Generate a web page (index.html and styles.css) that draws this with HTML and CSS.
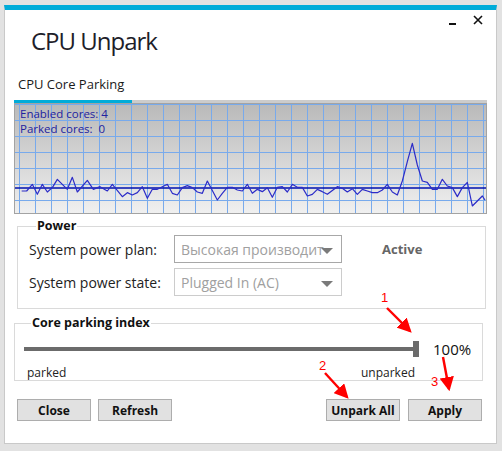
FILE: index.html
```html
<!DOCTYPE html>
<html>
<head>
<meta charset="utf-8">
<link rel="stylesheet" href="styles.css">
</head>
<body>
<div class="window">
  <div class="titlebar">
    <h1 class="title">CPU Unpark</h1>
    <div class="controls">
      <span class="ctl-min"></span>
      <svg class="ctl-close" width="10" height="10" viewBox="0 0 10 10"><path d="M1 1L9 9M9 1L1 9" stroke="#111" stroke-width="1.6"/></svg>
    </div>
  </div>
  <div class="tabs">
    <div class="tab">CPU Core Parking</div>
  </div>
  <div class="tabline"><div class="tabline-active"></div></div>
  <div class="chart">
    <svg class="chart-svg" width="471" height="109" viewBox="0 0 471 109">
      <defs>
        <linearGradient id="bg" x1="0" y1="0" x2="0" y2="1">
          <stop offset="0" stop-color="#b9b9b9"/>
          <stop offset="1" stop-color="#f0f0f0"/>
        </linearGradient>
        <pattern id="grid" x="4" y="0" width="16" height="16" patternUnits="userSpaceOnUse">
          <rect x="0" y="0" width="1" height="16" fill="#78aaec"/>
          <rect x="0" y="0" width="16" height="1" fill="#78aaec"/>
        </pattern>
      </defs>
      <rect width="471" height="109" fill="url(#bg)"/>
      <rect width="471" height="109" fill="url(#grid)"/>
      <line x1="0" y1="84" x2="471" y2="84" stroke="#0010b0" stroke-width="1.4"/>
      <g transform="translate(-15,-4) scale(0.33333)">
        <polyline fill="none" stroke="#2c2cc8" stroke-width="1.2" vector-effect="non-scaling-stroke" stroke-linejoin="round"
          points="65,273 80,273 97,253 112,283 127,253 142,276 157,263 172,238 202,268 217,232 232,276 262,241 280,268 300,260 322,273 337,253 367,290 382,278 397,285 412,278 427,260 442,295 457,268 472,268 502,253 517,280 532,285 547,263 562,257 577,263 592,276 607,280 622,243 652,300 667,280 682,262 697,262 712,270 727,273 742,253 757,280 772,268 787,275 802,263 817,292 832,262 847,260 862,276 877,253 892,262 907,262 922,288 937,283 952,268 967,275 982,283 1012,260 1027,265 1042,276 1057,266 1072,283 1087,268 1102,273 1117,278 1132,278 1147,270 1162,253 1177,276 1192,285 1207,243 1222,185 1237,130 1252,195 1267,243 1282,247 1297,268 1312,268 1327,238 1342,258 1357,263 1372,290 1387,263 1402,247 1417,318 1447,288 1455,300"/>
      </g>
    </svg>
    <div class="chart-info">
      <div>Enabled cores: 4</div>
      <div>Parked cores:&nbsp;&nbsp;0</div>
    </div>
  </div>

  <fieldset class="group power">
    <legend>Power</legend>
    <div class="power-grid">
      <div class="label">System power plan:</div>
      <div class="combo combo-focus"><span class="combo-text clip">Высокая производительность</span><span class="combo-arrow"></span></div>
      <div class="status">Active</div>
      <div class="label">System power state:</div>
      <div class="combo"><span class="combo-text">Plugged In (AC)</span><span class="combo-arrow"></span></div>
      <div></div>
    </div>
  </fieldset>

  <fieldset class="group parking">
    <legend>Core parking index</legend>
    <div class="slider-row">
      <div class="slider">
        <div class="track"></div>
        <div class="thumb"></div>
      </div>
      <div class="percent">100%</div>
    </div>
    <div class="slider-labels">
      <span>parked</span>
      <span>unparked</span>
    </div>
  </fieldset>

  <div class="buttons">
    <div class="btn-group">
      <button class="btn">Close</button>
      <button class="btn">Refresh</button>
    </div>
    <div class="btn-group right">
      <button class="btn">Unpark All</button>
      <button class="btn">Apply</button>
    </div>
  </div>

  <svg class="annotations" width="502" height="451" viewBox="0 0 502 451">
    <defs>
      <marker id="ah" markerWidth="6" markerHeight="6" refX="5" refY="3" orient="auto" markerUnits="strokeWidth">
        <path d="M0 0L6 3L0 6Z" fill="#ff0000"/>
      </marker>
    </defs>
    <g stroke="#ff0000" stroke-width="2.4" fill="none">
      <line x1="387" y1="308" x2="410" y2="331" marker-end="url(#ah)"/>
      <line x1="325" y1="373" x2="347" y2="397" marker-end="url(#ah)"/>
      <line x1="443" y1="357" x2="449" y2="389" marker-end="url(#ah)"/>
    </g>
    <g fill="#ff0000" font-family="Liberation Sans, sans-serif" font-size="13">
      <text x="381" y="302">1</text>
      <text x="319" y="370">2</text>
      <text x="431" y="386">3</text>
    </g>
  </svg>
</div>
</body>
</html>
```
FILE: styles.css
```css
* { box-sizing: border-box; }
html, body { margin: 0; padding: 0; }
body {
  background: #e2e2e2;
  font-family: "Open Sans", "Noto Sans", sans-serif;
  color: #1a1a1a;
  width: 502px;
  height: 451px;
  overflow: hidden;
}
.window {
  position: relative;
  margin: 5px 0 0 4px;
  width: 493px;
  height: 439px;
  background: #fff;
  border: 1px solid #c9c9c9;
  border-top: 5px solid #00acd9;
  padding: 0 9px 0 9px;
}
.titlebar {
  display: flex;
  justify-content: space-between;
  align-items: flex-start;
  height: 56px;
}
.title {
  margin: 14px 0 0 17px;
  font-family: "Open Sans", sans-serif;
  font-weight: 400;
  font-size: 24px;
  letter-spacing: -1px;
  line-height: 34px;
  color: #1e1e2a;
}
.controls {
  display: flex;
  align-items: flex-start;
  gap: 17px;
  margin: 5px 4px 0 0;
}
.ctl-min {
  display: block;
  width: 7px;
  height: 2px;
  background: #111;
  margin-top: 8px;
}
.ctl-close { display: block; }
.tabs { display: flex; height: 34px; }
.tab {
  margin: 8px 0 0 4px;
  font-size: 13px;
  line-height: 20px;
  color: #1a1a1a;
}
.tabline {
  height: 3px;
  background: #cccccc;
}
.tabline-active {
  width: 118px;
  height: 3px;
  background: #00acd9;
}
.chart {
  position: relative;
  height: 111px;
  border: 1px solid #a3a3a3;
  display: flex;
}
.chart-svg { display: block; }
.chart-info {
  position: absolute;
  left: 5px;
  top: 2px;
  font-size: 11.5px;
  line-height: 15px;
  color: #2222a0;
}
.group {
  border: 1px solid #dadada;
  margin: 0;
  padding: 0;
  min-width: 0;
}
.group legend {
  font-weight: 700;
  font-size: 12.5px;
  line-height: 14px;
  padding: 0 1px;
  color: #111;
}
.power {
  margin: 5px 1px 0 3px;
  height: 90px;
  padding: 2px 0 0 11px;
}
.power legend { margin-left: 7px; }
.power-grid {
  display: grid;
  grid-template-columns: 145px 168px auto;
  grid-template-rows: 28px 28px;
  row-gap: 5px;
  align-items: center;
}
.label {
  font-size: 14px;
  color: #222;
}
.combo {
  position: relative;
  height: 28px;
  border: 1px solid #cccccc;
  overflow: hidden;
  display: flex;
  align-items: center;
  padding-left: 6px;
}
.combo-focus { border-color: #a8a8a8; }
.combo-text {
  font-size: 14px;
  color: #a0a0a0;
  white-space: nowrap;
}
.combo-text.clip {
  display: block;
  max-width: 143px;
  overflow: hidden;
}
.combo-arrow {
  position: absolute;
  right: 8px;
  top: 12px;
  width: 0;
  height: 0;
  border-left: 6px solid transparent;
  border-right: 6px solid transparent;
  border-top: 6px solid #7a7a7a;
}
.status {
  margin-left: 40px;
  font-weight: 700;
  font-size: 13px;
  color: #666;
}
.parking {
  margin: 7px 4px 0 0;
  height: 65px;
  padding: 0 0 0 9px;
}
.parking legend { margin-left: 7px; }
.slider-row {
  display: flex;
  align-items: center;
  height: 22px;
  margin-top: 8px;
}
.slider {
  position: relative;
  width: 395px;
  height: 16px;
  display: flex;
  align-items: center;
}
.track {
  width: 393px;
  height: 4px;
  background: #6b6b6b;
}
.thumb {
  position: absolute;
  left: 389px;
  top: 0;
  width: 6px;
  height: 16px;
  background: #6b6b6b;
}
.percent {
  margin-left: 14px;
  font-size: 15px;
  color: #111;
}
.slider-labels {
  display: flex;
  justify-content: space-between;
  width: 388px;
  margin: 4px 0 0 3px;
  font-size: 12px;
  line-height: 17px;
  color: #222;
}
.buttons {
  display: flex;
  justify-content: space-between;
  margin: 18px 5px 0 3px;
}
.btn-group { display: flex; gap: 7px; }
.btn-group.right { gap: 8px; }
.btn {
  width: 74px;
  height: 22px;
  background: #e1e1e1;
  border: 1px solid #adadad;
  font-family: "Open Sans", "Noto Sans", sans-serif;
  font-weight: 700;
  font-size: 12px;
  color: #111;
  padding: 0;
}
.annotations {
  position: absolute;
  left: -5px;
  top: -10px;
  pointer-events: none;
}
```
